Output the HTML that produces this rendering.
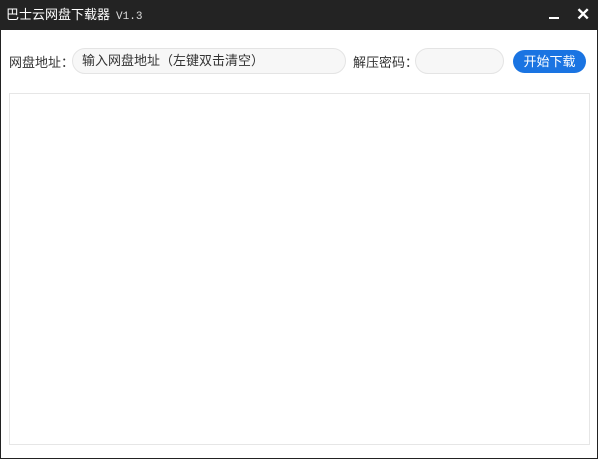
<!DOCTYPE html>
<html><head><meta charset="utf-8"><style>
*{margin:0;padding:0;box-sizing:border-box}
body{width:600px;height:460px;background:#fff;font-family:"Liberation Sans","Noto Sans CJK SC",sans-serif;position:relative;overflow:hidden}
.win{position:absolute;left:0;top:0;width:598px;height:459px;border:1px solid #222;border-top:none;background:#fff}
.title{position:absolute;left:0;top:0;width:598px;height:30px;background:#232323;color:#fff;font-size:13px;line-height:30px;padding-left:6px}
.title .v{font-family:"Liberation Mono",monospace;font-size:11px;margin-left:6px;color:#ddd}
.min{position:absolute;left:549px;top:17px;width:10px;height:2px;background:#fff}
.x{position:absolute;left:576px;top:5px;color:#fff;font-size:17px;font-weight:bold;line-height:20px}
.lbl{position:absolute;font-size:13px;color:#333;top:52px}
.inp{position:absolute;top:48px;height:26px;border:1px solid #e4e4e4;border-radius:13px;background:#f7f7f7;font-size:13px;color:#333;line-height:24px;padding-left:9px}
.btn{position:absolute;left:513px;top:50px;width:73px;height:23px;background:#1a74e2;border-radius:12px;color:#fff;font-size:13px;line-height:23px;text-align:center}
.area{position:absolute;left:9px;top:93px;width:581px;height:352px;border:1px solid #e6e6e6}
</style></head><body>
<div class="win"></div>
<div class="title">巴士云网盘下载器<span class="v">V1.3</span></div>
<div class="min"></div><div class="x">✕</div>
<div class="lbl" style="left:9px">网盘地址：</div>
<div class="inp" style="left:72px;width:274px">输入网盘地址（左键双击清空）</div>
<div class="lbl" style="left:353px">解压密码：</div>
<div class="inp" style="left:415px;width:89px"></div>
<div class="btn">开始下载</div>
<div class="area"></div>
</body></html>
